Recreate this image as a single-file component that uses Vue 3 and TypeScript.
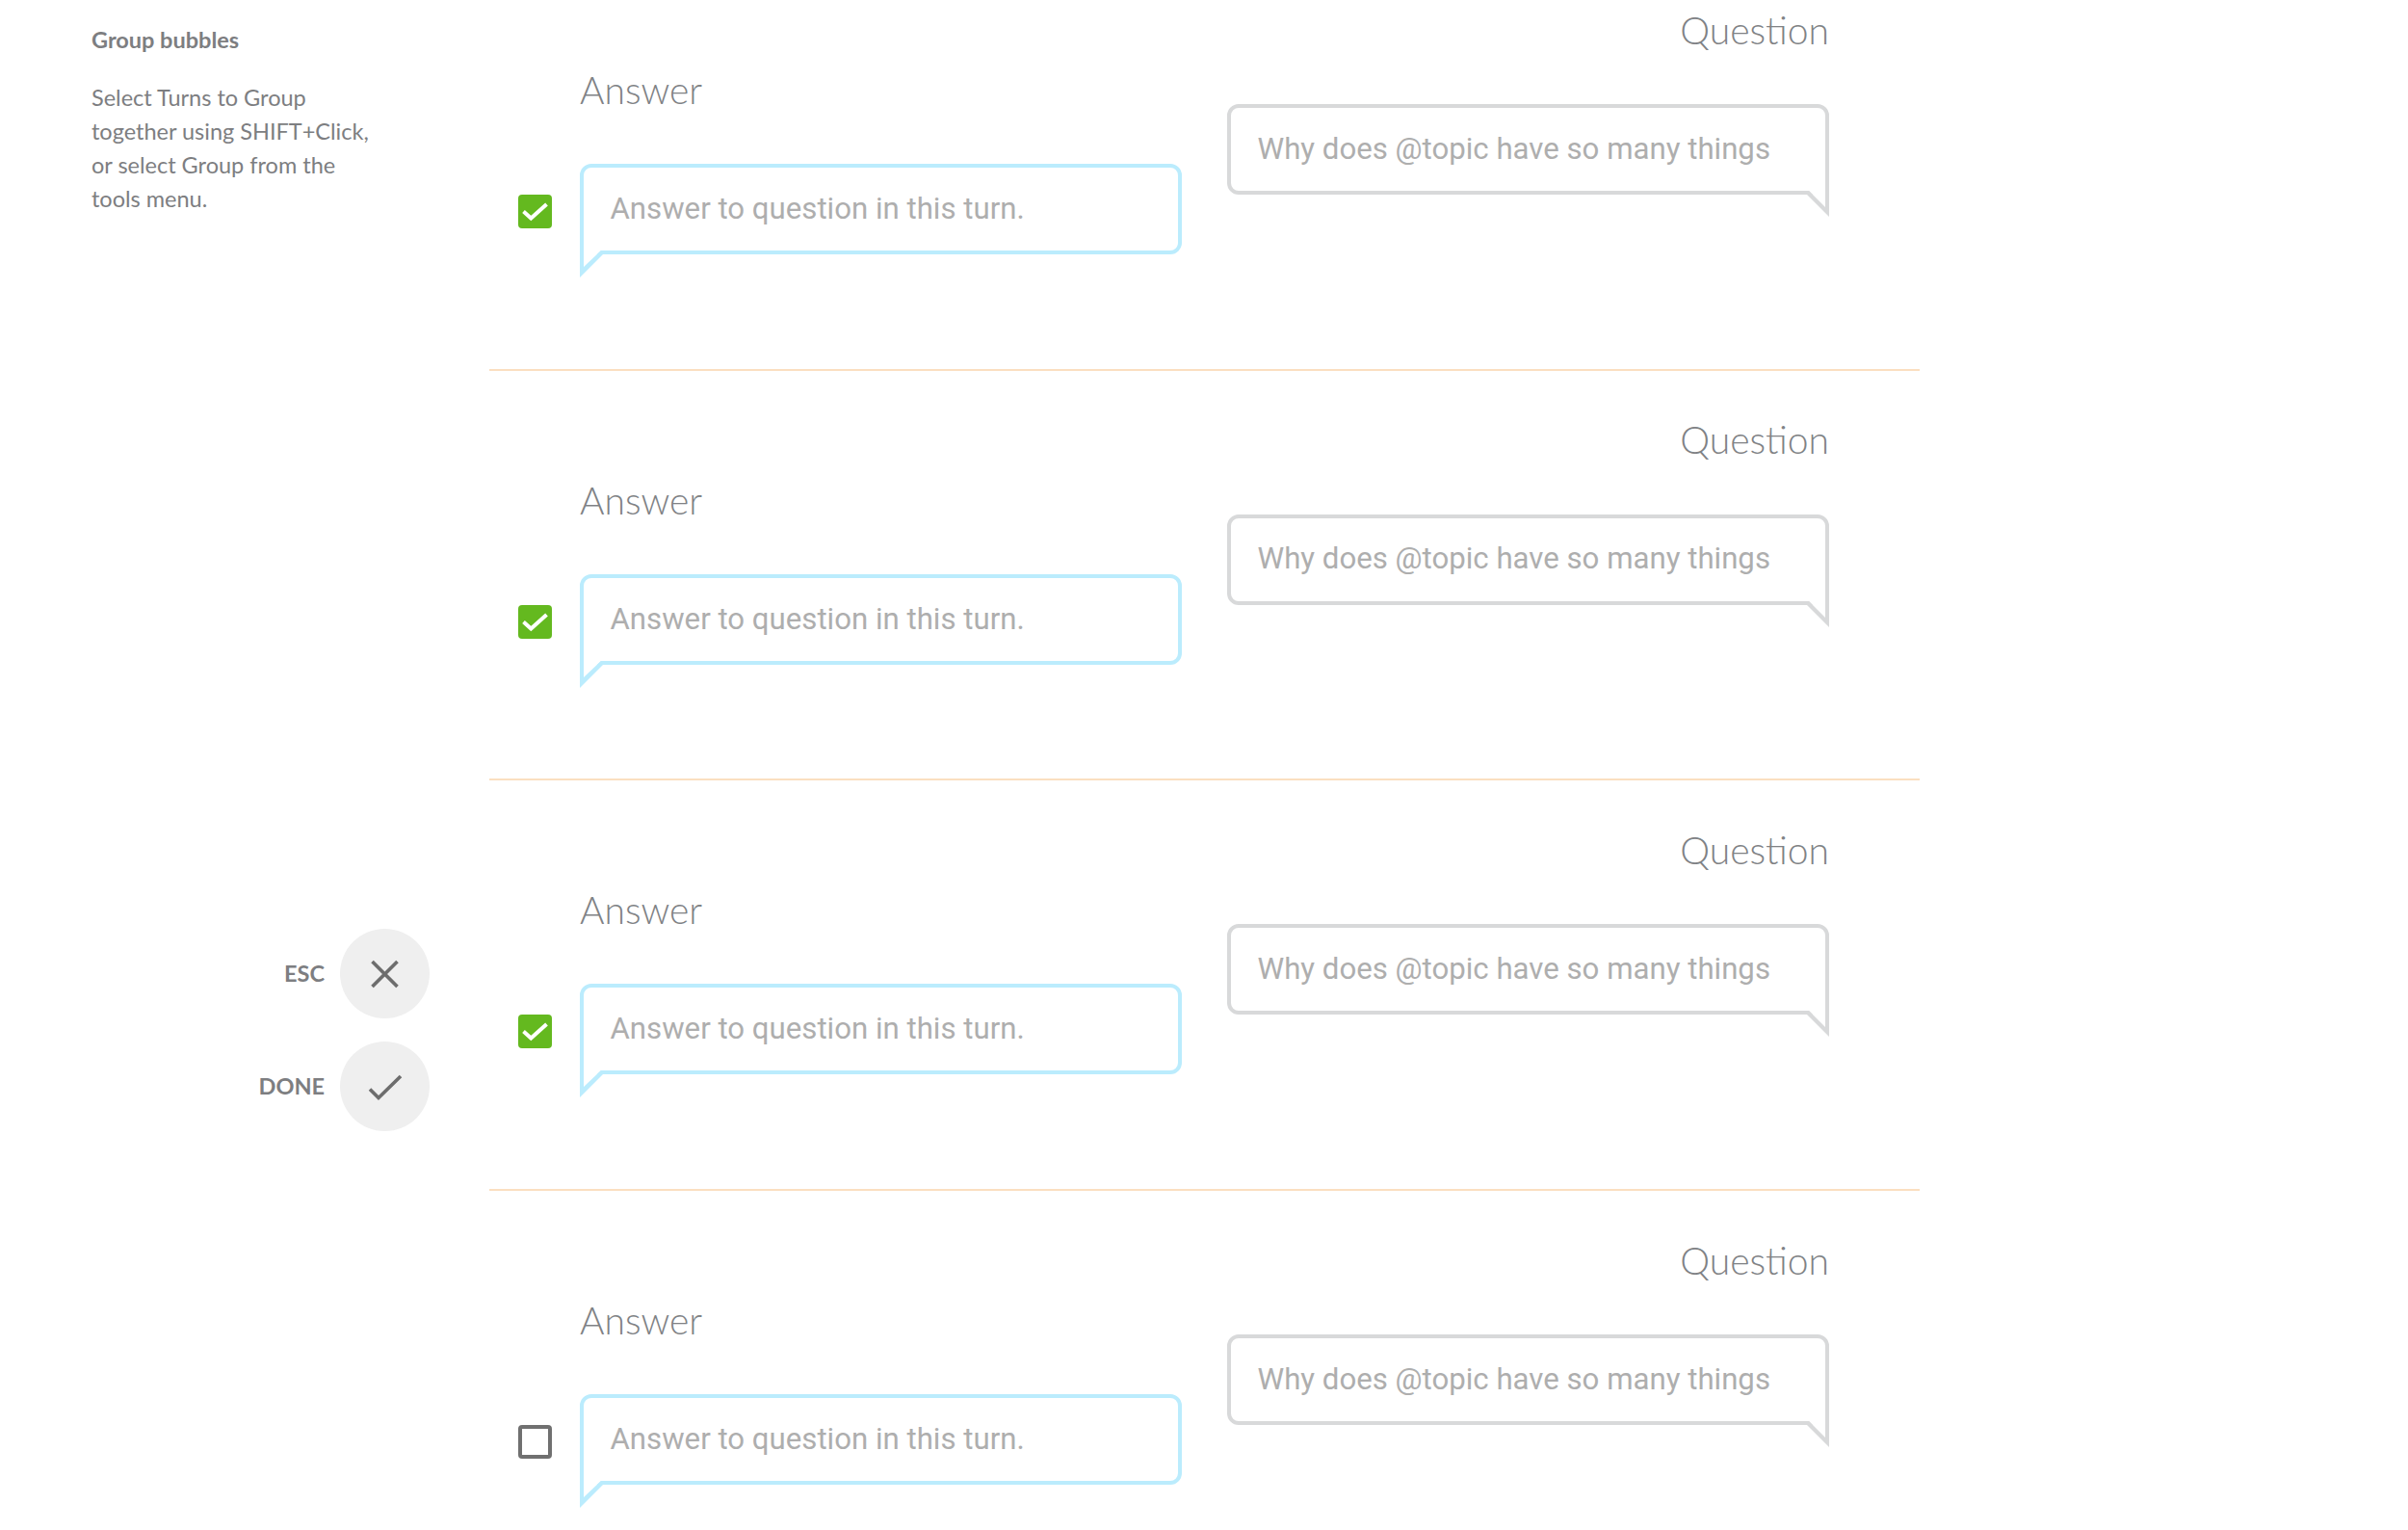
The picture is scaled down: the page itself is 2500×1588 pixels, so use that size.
<template>
  <div class="page">
    <aside class="sidebar">
      <h4 class="side-title">Group bubbles</h4>
      <p class="side-text">Select Turns to Group<br />together using SHIFT+Click,<br />or select Group from the<br />tools menu.</p>
      <div class="tools">
        <div class="tool">
          <span class="tool-label">ESC</span>
          <button class="tool-btn" title="Cancel">
            <svg width="92" height="92" viewBox="0 0 92 92">
              <path d="M32.5 33 L58.5 59 M58.5 33 L32.5 59" fill="none" stroke="#6d6d6d" stroke-width="3.6" />
            </svg>
          </button>
        </div>
        <div class="tool">
          <span class="tool-label">DONE</span>
          <button class="tool-btn" title="Done">
            <svg width="92" height="92" viewBox="0 0 92 92">
              <path d="M30 48.5 L39 57.5 L62 35" fill="none" stroke="#6d6d6d" stroke-width="3.6" />
            </svg>
          </button>
        </div>
      </div>
    </aside>

    <main class="turns">
      <section v-for="turn in turns" :key="turn.id" class="turn">
        <div class="answer-col">
          <div class="label">Answer</div>
          <div class="answer-row">
            <span class="check" :class="{ checked: turn.checked }">
              <svg v-if="turn.checked" width="35" height="35" viewBox="0 0 35 35">
                <path d="M5.5 17.5 L13.3 24.5 L29.5 10" fill="none" stroke="#fff" stroke-width="4" />
              </svg>
            </span>
            <div class="bubble bubble-answer">
              {{ answerText }}
              <svg class="tail tail-left" width="26" height="28" viewBox="0 0 26 28">
                <polygon points="4,0 22,0 4,17" fill="#fff" />
                <polygon points="0,0 0,28 24,4 26,4 26,0 22,0 4,17 4,0" fill="#bbecfd" />
              </svg>
            </div>
          </div>
        </div>
        <div class="question-col">
          <div class="label label-right">Question</div>
          <div class="bubble bubble-question">
            {{ questionText }}
            <svg class="tail tail-right" width="26" height="27" viewBox="0 0 26 27">
              <polygon points="22,0 5,0 22,17" fill="#fff" />
              <polygon points="26,0 26,27 3,4 0,4 0,0 5,0 22,17 22,0" fill="#d8d9da" />
            </svg>
          </div>
        </div>
      </section>
    </main>
  </div>
</template>

<script setup lang="ts">
const answerText = 'Answer to question in this turn.'
const questionText = 'Why does @topic have so many things'

const turns = [
  { id: 1, checked: true },
  { id: 2, checked: true },
  { id: 3, checked: true },
  { id: 4, checked: false }
]
</script>

<style>
html,
body {
  margin: 0;
  background: #fff;
  overflow: hidden;
}
</style>

<style scoped>
.page {
  display: flex;
  height: 1588px;
  overflow: hidden;
  background: #fff;
}

.sidebar {
  flex: none;
  width: 508px;
  box-sizing: border-box;
  padding: 24px 62px 0 95px;
  font-family: Lato, sans-serif;
  color: #7d7e81;
}

.side-title {
  margin: 0;
  font-size: 23.5px;
  line-height: 35px;
  font-weight: 700;
}

.side-text {
  margin: 25px 0 0;
  font-size: 23.5px;
  line-height: 35px;
  white-space: nowrap;
}

.tools {
  display: flex;
  flex-direction: column;
  gap: 24px;
  margin-top: 740px;
}

.tool {
  display: flex;
  justify-content: flex-end;
  align-items: center;
  gap: 16px;
}

.tool-label {
  font-size: 23.5px;
  font-weight: 700;
  margin-top: -2px;
}

.tool-btn {
  width: 93px;
  height: 93px;
  padding: 0;
  border: none;
  border-radius: 50%;
  background: #efefef;
  display: flex;
  align-items: center;
  justify-content: center;
}

.turns {
  flex: none;
  width: 1485px;
  margin-top: -41px;
}

.turn {
  display: flex;
  align-items: flex-start;
  gap: 47px;
  height: 425.7px;
  box-sizing: border-box;
  padding: 48.5px 0 0 30px;
  border-bottom: 2px solid #fbdfc0;
}

.turn:last-child {
  border-bottom: none;
}

.answer-col {
  margin-top: 62.5px;
}

.label {
  font-family: Lato, sans-serif;
  font-weight: 300;
  font-size: 39px;
  line-height: 46px;
  color: #808285;
  margin-bottom: 54px;
  padding-left: 64px;
}

.label-right {
  padding-left: 0;
  text-align: right;
  margin-bottom: 54.5px;
}

.answer-row {
  display: flex;
  align-items: center;
  gap: 29px;
}

.check {
  flex: none;
  width: 35px;
  height: 35px;
  box-sizing: border-box;
  margin-top: 5px;
  border: 4px solid #707070;
  border-radius: 4px;
}

.check.checked {
  border: none;
  background: #64b91f;
}

.check svg {
  display: block;
}

.bubble {
  position: relative;
  width: 625px;
  height: 94px;
  box-sizing: border-box;
  padding: 0 28px 2px 27.5px;
  display: flex;
  align-items: center;
  border-width: 4px;
  border-style: solid;
  border-radius: 12px;
  font-family: Roboto, sans-serif;
  font-size: 31.2px;
  color: #aeaeae;
  white-space: nowrap;
}

.bubble-answer {
  padding-bottom: 1px;
  border-color: #bbecfd;
  border-bottom-left-radius: 0;
}

.bubble-question {
  border-color: #d8d9da;
  border-bottom-right-radius: 0;
}

.tail {
  position: absolute;
  top: 100%;
  display: block;
}

.tail-left {
  left: -4px;
}

.tail-right {
  right: -4px;
}
</style>
